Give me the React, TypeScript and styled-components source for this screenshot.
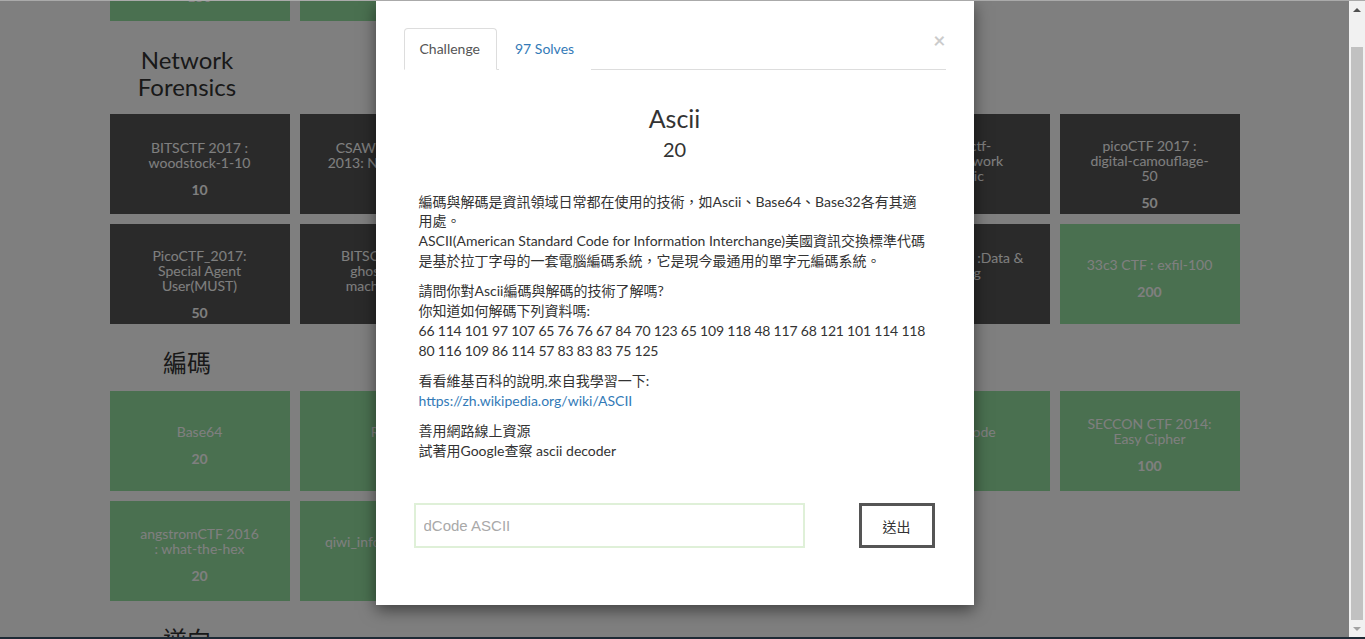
import { useLayoutEffect, useRef } from "react"
import styled, { createGlobalStyle } from "styled-components"

const GlobalStyle = createGlobalStyle`
  * { box-sizing: border-box; }
  html, body, #root { margin: 0; padding: 0; height: 100%; overflow: hidden; }
  body {
    font-family: "Lato", "Noto Sans CJK TC", sans-serif;
    font-size: 14px;
    line-height: 1.42857;
    color: #333;
    background: #fff;
  }
`

const Frame = styled.div`
  position: relative;
  height: 100vh;
  border-top: 1px solid #aaa;
  border-bottom: 2px solid #1e2a35;
  overflow: hidden;
`

const PageScroller = styled.div`
  position: relative;
  height: 100%;
  overflow: hidden;
  padding-right: 16px;
`

const Container = styled.div`
  display: flex;
  flex-direction: column;
  width: 1140px;
  margin: 0 auto;
  padding-bottom: 40px;
`

const CategoryTitle = styled.h3`
  width: 165px;
  margin: 26px 0 14px;
  font-size: 24px;
  font-weight: 400;
  line-height: 1.1;
  text-align: center;
  color: #333;
`

const TileGrid = styled.div`
  display: grid;
  grid-template-columns: repeat(6, 180px);
  gap: 10px;
  padding: 0 5px;
`

const Tile = styled.div<{ $solved?: boolean }>`
  height: 100px;
  display: flex;
  flex-direction: column;
  padding: 24px 8px 13px;
  background: ${p => (p.$solved ? "#94e0a0" : "#555")};
  color: #fff;
  text-align: center;
`

const TileBody = styled.div`
  margin: auto 0;
`

const TileName = styled.div`
  font-size: 14px;
  line-height: 15px;
  white-space: nowrap;
`

const TilePoints = styled.div`
  margin-top: 10px;
  font-size: 14px;
  font-weight: 700;
  line-height: 20px;
`

const Backdrop = styled.div`
  position: absolute;
  inset: 0;
  background: rgba(0, 0, 0, 0.5);
`

const ModalLayer = styled.div`
  position: absolute;
  inset: 0;
  display: flex;
`

const DialogArea = styled.div`
  flex: 1;
  overflow: hidden;
`

const Dialog = styled.div`
  position: relative;
  display: flex;
  flex-direction: column;
  width: 598px;
  margin: 0 auto;
  padding: 27px 28px 57px;
  background: #fff;
  box-shadow: 0 5px 15px rgba(0, 0, 0, 0.5);
`

const CloseButton = styled.button`
  position: absolute;
  top: 28px;
  right: 28px;
  padding: 0;
  border: 0;
  background: none;
  font-family: "Lato", sans-serif;
  font-size: 21px;
  font-weight: 700;
  line-height: 1;
  color: #000;
  opacity: 0.2;
`

const TabNav = styled.ul`
  display: flex;
  margin: 0;
  padding: 0;
  list-style: none;
  border-bottom: 1px solid #ddd;
`

const TabLink = styled.li<{ $active?: boolean }>`
  margin-right: 2px;
  margin-bottom: -1px;
  padding: 10px 16px 10px 15px;
  line-height: 20px;
  border: 1px solid ${p => (p.$active ? "#ddd" : "transparent")};
  border-bottom-color: ${p => (p.$active ? "#fff" : "transparent")};
  border-radius: 4px 4px 0 0;
  background: #fff;
  color: ${p => (p.$active ? "#555" : "#337ab7")};
`

const ChallengeName = styled.h3`
  margin: 35px 0 0;
  font-size: 25px;
  font-weight: 400;
  line-height: 1.1;
  text-align: center;
`

const ChallengeValue = styled.h4`
  margin: 5px 0 0;
  font-size: 20px;
  font-weight: 400;
  line-height: 1.1;
  text-align: center;
`

const Description = styled.div`
  margin-top: 32px;
  padding: 0 15px;

  p {
    margin: 0 0 10px;
  }

  a {
    color: #337ab7;
    text-decoration: none;
  }
`

const Numbers = styled.span`
  letter-spacing: -0.2px;
`

const SubmitRow = styled.form`
  display: flex;
  justify-content: space-between;
  margin: 32px 0 0;
  padding: 0 11px 0 10px;
`

const AnswerInput = styled.input`
  width: 391px;
  height: 45px;
  padding: 0 8px;
  border: 2px solid #dff0d8;
  outline: none;
  font-family: "Liberation Sans", Arial, sans-serif;
  font-size: 15px;
  color: #333;

  &::placeholder {
    color: #a9a9a9;
  }
`

const SubmitButton = styled.button`
  width: 76px;
  height: 45px;
  border: 3px solid #555;
  background: #fff;
  font-family: "Lato", "Noto Sans CJK TC", sans-serif;
  font-size: 14px;
  color: #333;
`

const Scrollbar = styled.div`
  flex: none;
  width: 16px;
  display: flex;
  flex-direction: column;
  background: #f1f1f1;
`

const ScrollArrow = styled.div<{ $dir: "up" | "down"; $enabled?: boolean }>`
  height: 17px;
  flex: none;
  display: flex;
  align-items: center;
  justify-content: center;

  &::before {
    content: "";
    border-left: 4px solid transparent;
    border-right: 4px solid transparent;
    ${p => (p.$dir === "up" ? "border-bottom" : "border-top")}: 4px solid
      ${p => (p.$enabled ? "#505050" : "#a3a3a3")};
  }
`

const ScrollTrack = styled.div`
  flex: 1;
  display: flex;
  flex-direction: column;
  padding: 0 2px;
`

const ScrollThumb = styled.div`
  flex: 1;
  margin-top: 29px;
  background: #c1c1c1;
`

type Challenge = { lines: string[]; points: number; solved?: boolean }
type Category = { name: string; challenges: Challenge[] }

const categories: Category[] = [
  {
    name: "Steganography",
    challenges: [
      { lines: ["Hack The Vote", "2016 : Warp Speed"], points: 150, solved: true },
      { lines: ["Stego 101"], points: 50, solved: true },
      { lines: ["ASIS CTF : Hidden"], points: 100, solved: true },
    ],
  },
  {
    name: "Network Forensics",
    challenges: [
      { lines: ["BITSCTF 2017 :", "woodstock-1-10"], points: 10 },
      { lines: ["CSAW CTF Quals", "2013: Networking 1"], points: 100 },
      { lines: ["Sharif CTF :", "Network Forensics"], points: 50 },
      { lines: ["Hack.lu 2015 :", "Packet Analysis"], points: 100 },
      { lines: ["hitcon ctf-", "2016 network", "forensic"], points: 100 },
      { lines: ["picoCTF 2017 :", "digital-camouflage-", "50"], points: 50 },
      { lines: ["PicoCTF_2017:", "Special Agent", "User(MUST)"], points: 50 },
      { lines: ["BITSCTF 2017 :", "ghosts in the", "machine 2017"], points: 60 },
      { lines: ["Defcon Quals :", "Pcap"], points: 80 },
      { lines: ["ASIS CTF 2016 :", "Firtog"], points: 100 },
      { lines: ["Pragyan CTF :Data &", "Mining"], points: 100 },
      { lines: ["33c3 CTF : exfil-100"], points: 200, solved: true },
    ],
  },
  {
    name: "編碼",
    challenges: [
      { lines: ["Base64"], points: 20, solved: true },
      { lines: ["Rot13"], points: 20, solved: true },
      { lines: ["Ascii"], points: 20 },
      { lines: ["Base85"], points: 30, solved: true },
      { lines: ["Morse code"], points: 20, solved: true },
      { lines: ["SECCON CTF 2014:", "Easy Cipher"], points: 100, solved: true },
      { lines: ["angstromCTF 2016", ": what-the-hex"], points: 20, solved: true },
      { lines: ["qiwi_infosec_2016_1"], points: 50, solved: true },
    ],
  },
  {
    name: "逆向",
    challenges: [
      { lines: ["Reverse 101"], points: 50 },
      { lines: ["CSAW 2015 :", "wyvern"], points: 500 },
    ],
  },
]

export default function App() {
  const scrollerRef = useRef<HTMLDivElement>(null)
  const anchorRef = useRef<HTMLHeadingElement>(null)

  // the page behind the modal is scrolled down to the Network Forensics block
  useLayoutEffect(() => {
    if (scrollerRef.current && anchorRef.current) {
      scrollerRef.current.scrollTop = anchorRef.current.offsetTop - 46
    }
  }, [])

  return (
    <>
      <GlobalStyle />
      <Frame>
        <PageScroller ref={scrollerRef}>
          <Container>
            {categories.map(cat => (
              <section key={cat.name}>
                <CategoryTitle ref={cat.name === "Network Forensics" ? anchorRef : undefined}>
                  {cat.name}
                </CategoryTitle>
                <TileGrid>
                  {cat.challenges.map((ch, i) => (
                    <Tile key={i} $solved={ch.solved}>
                      <TileBody>
                        {ch.lines.map(line => (
                          <TileName key={line}>{line}</TileName>
                        ))}
                        <TilePoints>{ch.points}</TilePoints>
                      </TileBody>
                    </Tile>
                  ))}
                </TileGrid>
              </section>
            ))}
          </Container>
        </PageScroller>

        <Backdrop />

        <ModalLayer>
          <DialogArea>
            <Dialog>
              <CloseButton type="button">×</CloseButton>
              <TabNav>
                <TabLink $active>Challenge</TabLink>
                <TabLink>97 Solves</TabLink>
              </TabNav>

              <ChallengeName>Ascii</ChallengeName>
              <ChallengeValue>20</ChallengeValue>

              <Description>
                <p>
                  編碼與解碼是資訊領域日常都在使用的技術，如Ascii、Base64、Base32各有其適用處。
                  <br />
                  ASCII(American Standard Code for Information Interchange)美國資訊交換標準代碼是基於拉丁字母的一套電腦編碼系統，它是現今最通用的單字元編碼系統。
                </p>
                <p>
                  請問你對Ascii編碼與解碼的技術了解嗎?
                  <br />
                  你知道如何解碼下列資料嗎:
                  <br />
                  <Numbers>
                    66 114 101 97 107 65 76 76 67 84 70 123 65 109 118 48 117 68 121 101 114 118 80 116 109 86 114 57 83 83 83 75 125
                  </Numbers>
                </p>
                <p>
                  看看維基百科的說明,來自我學習一下:
                  <br />
                  <a href="#">https://zh.wikipedia.org/wiki/ASCII</a>
                </p>
                <p>
                  善用網路線上資源
                  <br />
                  試著用Google查察 ascii decoder
                </p>
              </Description>

              <SubmitRow onSubmit={e => e.preventDefault()}>
                <AnswerInput placeholder="dCode ASCII" />
                <SubmitButton type="submit">送出</SubmitButton>
              </SubmitRow>
            </Dialog>
          </DialogArea>

          <Scrollbar>
            <ScrollArrow $dir="up" $enabled />
            <ScrollTrack>
              <ScrollThumb />
            </ScrollTrack>
            <ScrollArrow $dir="down" />
          </Scrollbar>
        </ModalLayer>
      </Frame>
    </>
  )
}
